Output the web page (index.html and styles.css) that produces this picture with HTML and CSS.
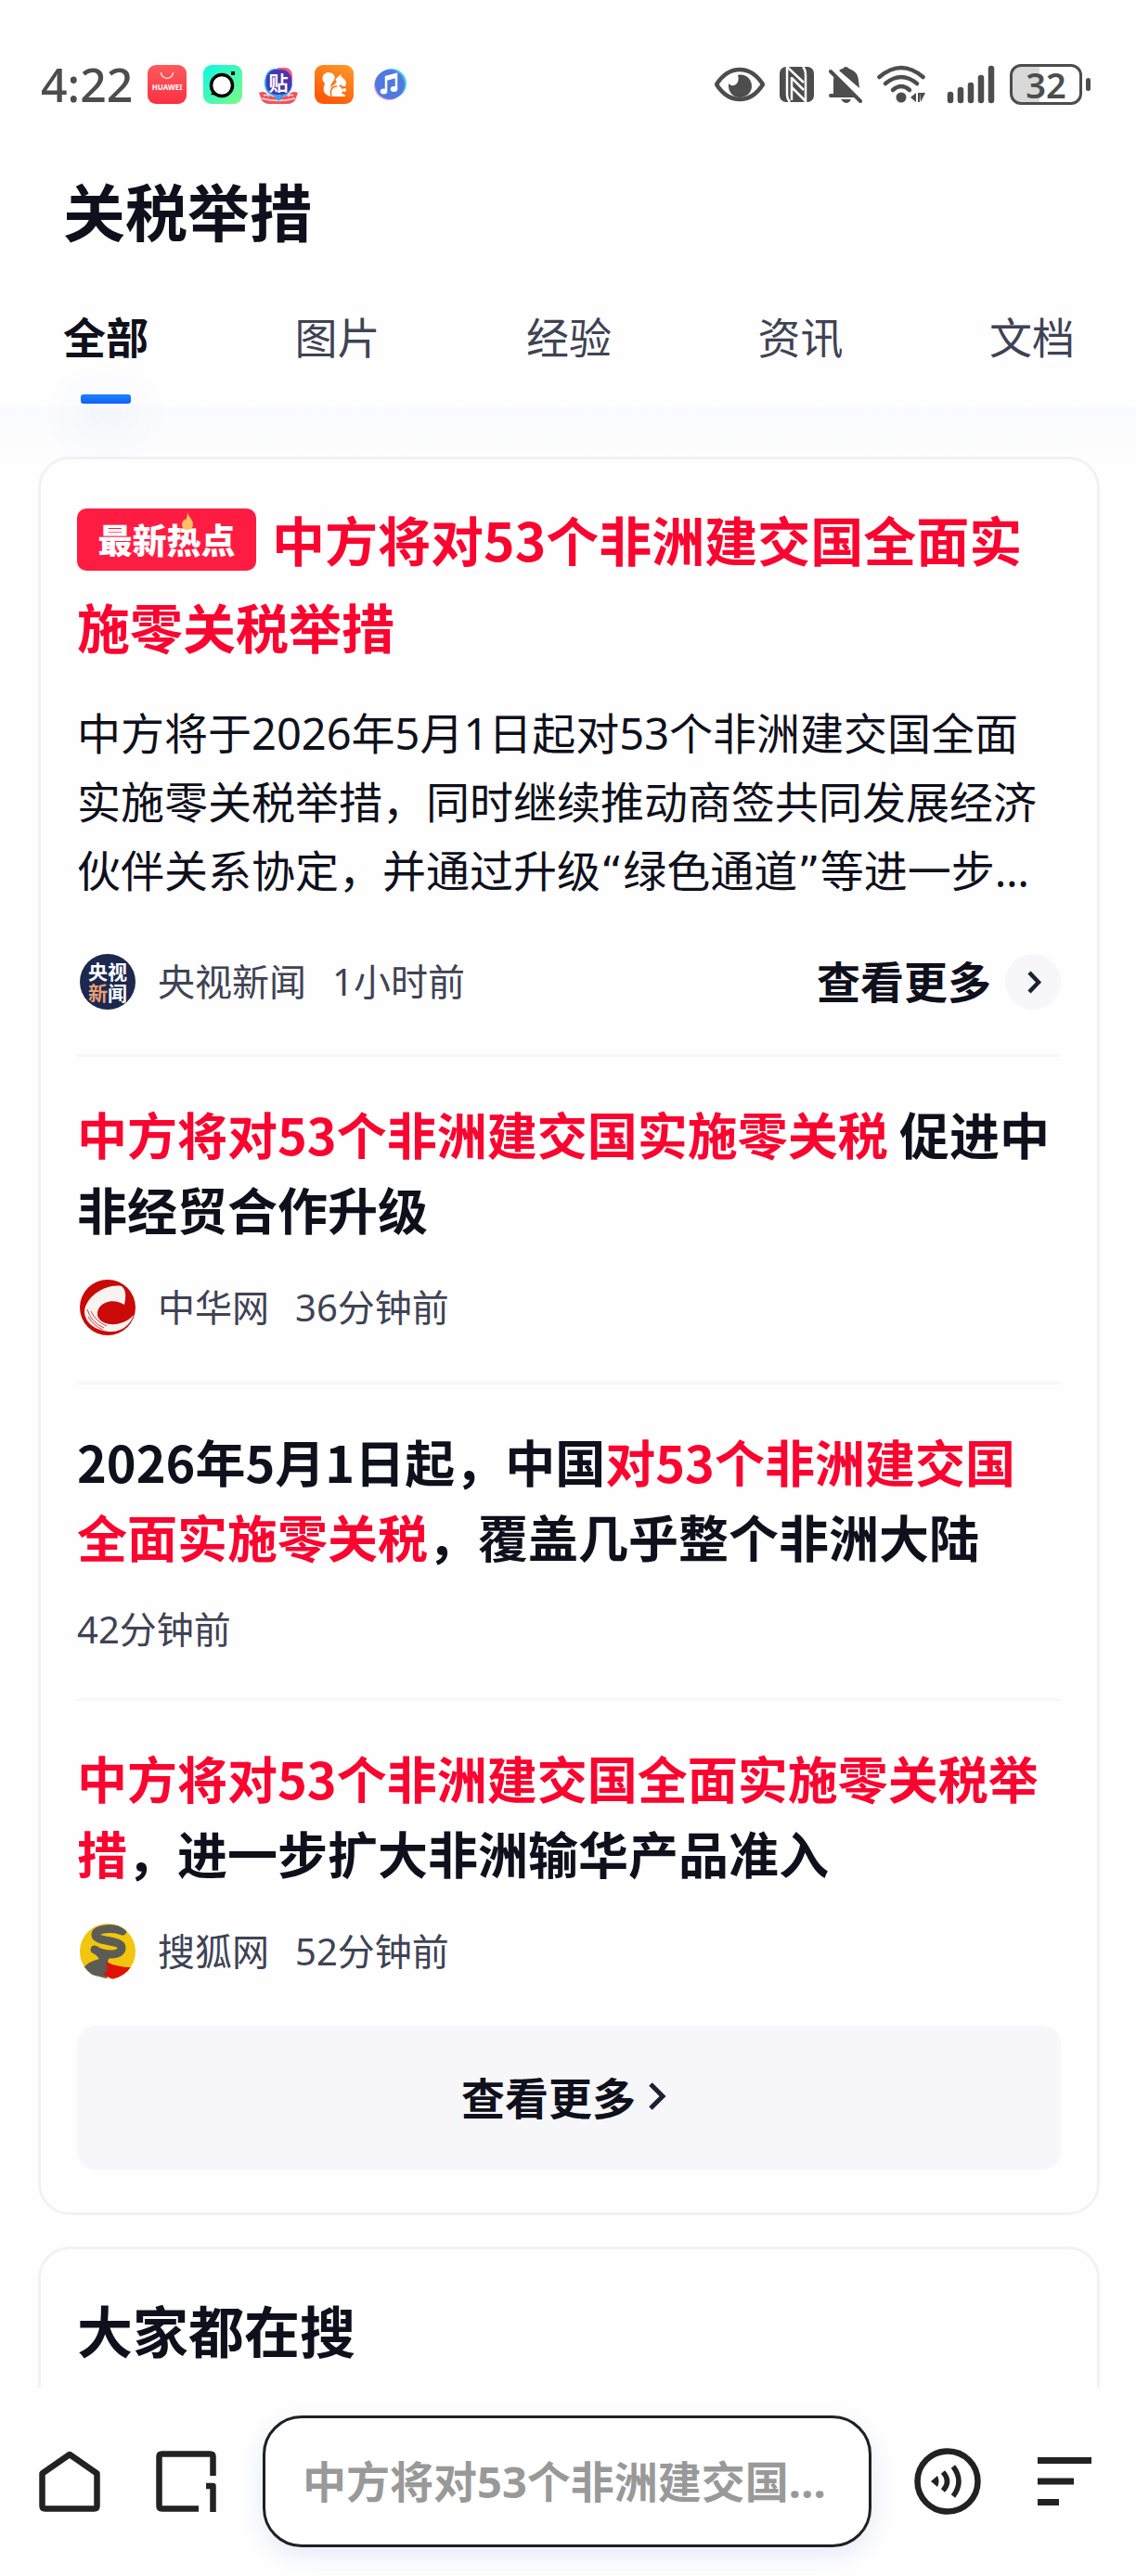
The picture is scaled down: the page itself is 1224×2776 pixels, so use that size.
FILE: index.html
```html
<!DOCTYPE html>
<html lang="zh-CN">
<head>
    <meta charset="UTF-8">
    <meta name="viewport" content="width=device-width, initial-scale=1.0">
    <title>关税举措</title>
    <link rel="stylesheet" href="styles.css">
</head>
<body>
    <header class="header">
        <div class="status-bar">
            <div class="status-left">
                <span class="clock">4:22</span>
                <svg width="42" height="42" viewBox="0 0 42 42">
                    <defs>
                        <linearGradient id="hw" x1="0" y1="0" x2="0" y2="1"><stop offset="0" stop-color="#ff5a5c"/><stop offset="1" stop-color="#fb3043"/></linearGradient>
                    </defs>
                    <rect width="42" height="42" rx="9" fill="url(#hw)"/>
                    <path d="M14.500 8a6.500 6.500 0 0 0 13 0" fill="none" stroke="#ffd9da" stroke-width="1.500"/>
                    <text x="21" y="27" text-anchor="middle" font-size="8" font-weight="700" fill="#fff">HUAWEI</text>
                </svg>
                <svg width="42" height="42" viewBox="0 0 42 42">
                    <defs>
                        <linearGradient id="chat" x1="0" y1="0" x2="1" y2="1"><stop offset="0" stop-color="#0cf7e4"/><stop offset="1" stop-color="#7bfb86"/></linearGradient>
                    </defs>
                    <rect width="42" height="42" rx="9" fill="url(#chat)"/>
                    <path d="M8 32l4-5 6 6z" fill="#000"/>
                    <circle cx="20" cy="22" r="11.500" fill="#fff" stroke="#000" stroke-width="3.500"/>
                    <rect x="30" y="7" width="4" height="4" fill="#000"/>
                </svg>
                <svg width="42" height="42" viewBox="0 0 42 42">
                    <path d="M0 30q6-3 10 2 11 6 22 0 4-5 10-2l-3 8q-3 4-8 4H11q-5 0-8-4z" fill="#f0525e"/>
                    <path d="M3 36q18 5 36 0M5 33q4-2 6 1M37 33q-4-2-6 1" fill="none" stroke="#ffd9d4" stroke-width="1.500"/>
                    <path d="M16 4h12q8 1 8 10v8q-2 10-10 12l-5 5-4-5Q7 31 6 22v-5Q8 5 16 4z" fill="#28a8f8"/>
                    <path d="M19 3h10q7 1 7 9v7l-6-9z" fill="#ef5a83"/>
                    <rect x="8" y="5" width="27" height="27" rx="11" fill="#4a35b0"/>
                    <text x="21" y="27" text-anchor="middle" font-size="21" font-weight="700" fill="#fff">贴</text>
                </svg>
                <svg width="42" height="42" viewBox="0 0 42 42">
                    <defs>
                        <linearGradient id="uc" x1="1" y1="0" x2="0.500" y2="1"><stop offset="0" stop-color="#ff9b2a"/><stop offset="1" stop-color="#fc5a08"/></linearGradient>
                    </defs>
                    <rect width="42" height="42" rx="9" fill="url(#uc)"/>
                    <path d="M17 34C10 32 8 27 11 20c-5-5-2-12 4-12 5 0 8 4 6 8-2 3-4 5-4 9 2-3 5-4 7-7-2-1-2-3 0-4l4-4 1 3c5 3 6 6 4 10-2 0-4 0-5-2l-2 2c4 1 5 5 3 8 3 0 4 1 4 3H20c-2 0-3-2-2-4z" fill="#fff"/>
                    <path d="M18 33c-2-6 1-10 6-10" fill="none" stroke="#fb6a12" stroke-width="1.500"/>
                    <circle cx="32" cy="27" r="2" fill="#fff"/>
                </svg>
                <svg width="42" height="42" viewBox="0 0 42 42">
                    <circle cx="20" cy="22" r="16" fill="#f2a0ee"/>
                    <circle cx="23" cy="20" r="16" fill="#53c8f5"/>
                    <circle cx="21" cy="21" r="16" fill="#4f79e0"/>
                    <path d="M17 28V13l11-3v16" fill="none" stroke="#fff" stroke-width="2.500"/>
                    <path d="M17 13l11-3v4l-11 3z" fill="#fff"/>
                    <ellipse cx="14.500" cy="28.500" rx="3.800" ry="3" fill="#fff"/>
                    <ellipse cx="25.500" cy="26" rx="3.800" ry="3" fill="#fff"/>
                </svg>
            </div>
            <div class="status-right">
                <svg width="54" height="38" viewBox="0 0 54 38">
                    <path d="M2 19C9 8 17 3 27 3s18 5 25 16C45 30 37 35 27 35S9 30 2 19z" fill="none" stroke="#4d4d4d" stroke-width="4.500" stroke-linejoin="round"/>
                    <path d="M25 9c8-2 15 4 15 12 0 7-6 12-13 12S14 27 15 18c4 5 13 1 10-9z" fill="#4d4d4d"/>
                </svg>
                <svg width="37" height="38" viewBox="0 0 37 38">
                    <rect width="37" height="38" rx="7" fill="#4d4d4d"/>
                    <path d="M25 0q3 3 3 9v29" fill="none" stroke="#fff" stroke-width="2.500"/>
                    <path d="M8 0v30q0 5 3 8" fill="none" stroke="#fff" stroke-width="2.500"/>
                    <path d="M8 0l18 17M13 12l13 13M13 22l15 15M13 11v25" fill="none" stroke="#fff" stroke-width="2.500"/>
                </svg>
                <svg width="36" height="42" viewBox="0 0 36 42">
                    <path d="M5 33V17q0-4 2-6l23 23H2" fill="#4d4d4d"/>
                    <path d="M11 6q2-2 4-2 3-4 7 0 9 3 10 12l1 9z" fill="#4d4d4d"/>
                    <path d="M2 33h26M2 7l32 32" stroke="#4d4d4d" stroke-width="4" stroke-linecap="round"/>
                    <path d="M13 37h11q-2 4-5 4t-6-4z" fill="#4d4d4d"/>
                </svg>
                <svg width="52" height="42" viewBox="0 0 52 42">
                    <g fill="none" stroke="#4d4d4d" stroke-width="4.500" stroke-linecap="round">
                        <path d="M2.500 13Q26-7 49.500 13"/>
                        <path d="M9 20q17-14 34 0"/>
                        <path d="M17 27q9-8 18 0"/>
                    </g>
                    <circle cx="26" cy="35" r="5.500" fill="#4d4d4d"/>
                    <path d="M36 35l6-5v10zM44 30h2v10h-2zM46 30h6l-5 10z" fill="#4d4d4d"/>
                </svg>
                <svg width="59" height="42" viewBox="0 0 59 42">
                    <path d="M11 32v6M22 27v11M33 22v16M44 14v24M55 4v34" stroke="#4d4d4d" stroke-width="6.500" stroke-linecap="round"/>
                </svg>
                <div class="battery">32</div>
            </div>
        </div>
        <h1 class="page-title">关税举措</h1>
        <nav class="tabs">
            <a href="#" class="tab active">全部</a>
            <a href="#" class="tab">图片</a>
            <a href="#" class="tab">经验</a>
            <a href="#" class="tab">资讯</a>
            <a href="#" class="tab">文档</a>
        </nav>
    </header>

    <main class="content">
        <section class="card">
            <article class="top-news">
                <h2 class="top-title"><span class="hot-badge">最新热点<svg class="flame" width="14" height="20" viewBox="0 0 14 20"><path d="M7 0c1 5 6 8 6 13 0 4-3 6-6 6s-6-2-6-6c0-3 2-4 3-6l1 2c1-3 2-5 2-9z" fill="#ffc062"/></svg></span>中方将对53个非洲建交国全面实施零关税举措</h2>
                <p class="summary">中方将于2026年5月1日起对53个非洲建交国全面实施零关税举措，同时继续推动商签共同发展经济伙伴关系协定，并通过升级<span class="quote">“</span>绿色通道<span class="quote">”</span>等进一步…</p>
                <div class="meta">
                    <svg class="logo" width="60" height="60" viewBox="0 0 60 60">
                        <circle cx="30" cy="30" r="30" fill="#1c2850"/>
                        <text x="30" y="27" text-anchor="middle" font-size="21" font-weight="700" fill="#fff">央视</text>
                        <text x="30" y="50" text-anchor="middle" font-size="21" font-weight="700" fill="#fff"><tspan fill="#e9a073">新</tspan>闻</text>
                    </svg>
                    <span>央视新闻</span>
                    <span>1小时前</span>
                    <a href="#" class="more-link">查看更多
                        <svg width="60" height="60" viewBox="0 0 60 60">
                            <circle cx="30" cy="30" r="30" fill="#f7f7fa"/>
                            <path d="M26 20l10 10.500L26 41" fill="none" stroke="#1a2233" stroke-width="4.500"/>
                        </svg>
                    </a>
                </div>
            </article>

            <article class="news-item">
                <h3 class="news-title"><em>中方将对53个非洲建交国实施零关税</em> 促进中非经贸合作升级</h3>
                <div class="meta">
                    <svg class="logo" width="60" height="60" viewBox="0 0 60 60">
                        <circle cx="30" cy="30" r="30" fill="#c90a06"/>
                        <path d="M48 27C50 18 50 11 45 7 29 4 7 17 5 34c0 12 12 22 29 22 12 0 21-8 24-18-6 7-16 11-26 10-12-2-16-10-11-18 6-8 18-9 27-3z" fill="#f7f3f1"/>
                        <path d="M8 32q4 14 18 20M12 34q5 11 17 16M9 40q6 10 16 14" fill="none" stroke="#d4433e" stroke-width="1"/>
                    </svg>
                    <span>中华网</span>
                    <span>36分钟前</span>
                </div>
            </article>

            <article class="news-item">
                <h3 class="news-title">2026年5月1日起，中国<em>对53个非洲建交国全面实施零关税</em>，覆盖几乎整个非洲大陆</h3>
                <div class="meta">
                    <span>42分钟前</span>
                </div>
            </article>

            <article class="news-item">
                <h3 class="news-title"><em>中方将对53个非洲建交国全面实施零关税举措</em>，进一步扩大非洲输华产品准入</h3>
                <div class="meta">
                    <svg class="logo" width="60" height="60" viewBox="0 0 60 60">
                        <defs><clipPath id="round"><circle cx="30" cy="30" r="30"/></clipPath></defs>
                        <g clip-path="url(#round)">
                            <rect width="60" height="60" fill="#f1c60c"/>
                            <path d="M0 55q20-4 36 5H0z" fill="#f4f4f4"/>
                            <path d="M3 48q8-8 18-10l-5-6 16 4-2 5 4 6-5 12-16-4H7z" fill="#5c5c57"/>
                            <path d="M28 41q14 7 32 6-8 12-21 14-8-2-14-7l5-4z" fill="#df1206"/>
                            <path d="M46 8C36 4 17 5 17 12c0 8 28 5 28 14 0 9-18 9-29 2" fill="none" stroke="#5c5c57" stroke-width="9" stroke-linecap="round"/>
                        </g>
                    </svg>
                    <span>搜狐网</span>
                    <span>52分钟前</span>
                </div>
            </article>

            <button class="more-btn">查看更多
                <svg width="30" height="32" viewBox="0 0 30 32"><path d="M2 3l13 13L2 29" fill="none" stroke="#1a2233" stroke-width="5"/></svg>
            </button>
        </section>

        <section class="card">
            <h2 class="section-title">大家都在搜</h2>
        </section>
    </main>

    <footer class="toolbar">
        <button class="tool-btn" aria-label="主页">
            <svg width="80" height="66" viewBox="0 0 80 66"><path d="M3.500 24.500L33 4l29.500 20.500v35q0 3-3 3h-53q-3 0-3-3z" fill="none" stroke="#222" stroke-width="6.500" stroke-linejoin="round"/></svg>
        </button>
        <button class="tool-btn" aria-label="窗口">
            <svg width="69" height="66" viewBox="0 0 69 66"><path d="M46 62.500H6.500q-3 0-3-3v-53q0-3 3-3h52q3 0 3 3V27" fill="none" stroke="#222" stroke-width="6.500"/><path d="M54 38h7.500v28" fill="none" stroke="#222" stroke-width="6.500" stroke-linejoin="round"/></svg>
        </button>
        <input class="search-box" type="text" aria-label="搜索" placeholder="中方将对53个非洲建交国…">
        <button class="tool-btn" aria-label="语音播报">
            <svg width="72" height="72" viewBox="0 0 72 72">
                <circle cx="36" cy="36" r="32.500" fill="none" stroke="#222" stroke-width="6.500"/>
                <path d="M18 36l7-6q3 6 0 12z" fill="#222"/>
                <path d="M31 26q9 10 0 20M42 20q12 16 0 32" fill="none" stroke="#222" stroke-width="5.500"/>
            </svg>
        </button>
        <button class="tool-btn" aria-label="菜单">
            <svg width="73" height="54" viewBox="0 0 73 54"><path d="M15 4.500h58M15 27h39M15 49.500h23" stroke="#222" stroke-width="7"/></svg>
        </button>
    </footer>
</body>
</html>
```

FILE: styles.css
```css
* {
    box-sizing: border-box;
}
body {
    margin: 0;
    height: 100vh;
    display: flex;
    flex-direction: column;
    overflow: hidden;
    background: #fefefe;
    color: #0f101c;
    font-family: "Noto Sans", "Noto Sans CJK SC", sans-serif;
}
h1, h2, h3, p {
    margin: 0;
}
a {
    color: inherit;
    text-decoration: none;
}
svg {
    display: block;
    flex: none;
}
button {
    border: none;
    padding: 0;
    background: none;
    color: inherit;
    font-family: inherit;
    cursor: pointer;
}

/* header */
.status-bar {
    display: flex;
    justify-content: space-between;
    align-items: center;
    height: 182px;
    padding: 0 50px 0 44px;
}
.status-left {
    display: flex;
    align-items: center;
    gap: 18px;
}
.status-right {
    display: flex;
    align-items: center;
    gap: 16px;
}
.clock {
    margin-right: -2px;
    font-size: 50px;
    font-weight: 500;
    line-height: 60px;
    color: #4d4d4d;
}
.battery {
    position: relative;
    width: 78px;
    height: 44px;
    margin-right: 8px;
    border: 3px solid #4d4d4d;
    border-radius: 12px;
    background: linear-gradient(90deg, #d9d9d9 29px, transparent 29px);
    color: #4d4d4d;
    font-size: 38px;
    font-weight: 600;
    line-height: 38px;
    text-align: center;
}
.battery::after {
    content: "";
    position: absolute;
    right: -12px;
    top: 12px;
    width: 5px;
    height: 14px;
    border-radius: 3px;
    background: #4d4d4d;
}
.page-title {
    padding: 7px 68px 0;
    font-size: 67px;
    line-height: 80px;
}
.tabs {
    display: flex;
    justify-content: space-between;
    padding: 64px 66px 0 68px;
}
.tab {
    position: relative;
    height: 105px;
    font-size: 46px;
    line-height: 60px;
    color: #3f4354;
}
.tab.active {
    font-weight: 700;
    color: #0f101c;
}
.tab.active::after {
    content: "";
    position: absolute;
    left: 50%;
    bottom: 3px;
    width: 54px;
    height: 10px;
    margin-left: -27px;
    border-radius: 3px;
    background: linear-gradient(#1c83ff, #1260f5);
    box-shadow: 0 16px 48px rgba(40, 100, 255, 0.25);
}

/* content */
.content {
    flex: 1;
    min-height: 0;
    overflow: hidden;
    padding: 54px 39px 0 41px;
    background: linear-gradient(rgba(249, 250, 252, 0.7), rgba(254, 254, 254, 0) 80px);
}
.card {
    margin-bottom: 34px;
    padding: 38px 39px 46px;
    border: 3px solid #f2f2f3;
    border-radius: 34px;
    background: #fefefe;
}
.top-title {
    font-family: "Noto Sans CJK SC", sans-serif;
    font-size: 57px;
    line-height: 94px;
    color: #fa0530;
}
.hot-badge {
    position: relative;
    display: inline-block;
    width: 193px;
    height: 67px;
    margin-right: 17px;
    border-radius: 10px;
    background: #ff1c42;
    color: #fff;
    font-size: 37px;
    font-weight: 900;
    line-height: 66px;
    text-align: center;
    vertical-align: 8px;
}
.flame {
    position: absolute;
    left: 112px;
    top: 4px;
}
.summary {
    margin: 32px 0 51px;
    font-size: 47px;
    line-height: 74px;
}
.quote {
    font-family: "DejaVu Sans", sans-serif;
}
.meta {
    display: flex;
    align-items: center;
    gap: 28px;
    font-size: 40px;
    line-height: 48px;
    color: #3f4354;
}
.logo {
    margin: 0 -4px 0 3px;
}
.more-link {
    display: flex;
    align-items: center;
    gap: 15px;
    margin-left: auto;
    color: #0f101c;
    font-size: 47px;
    font-weight: 700;
}
.top-news {
    padding-bottom: 48px;
}
.news-item {
    padding: 42px 0 50px;
    border-top: 3px solid #f7f7f8;
}
.news-title {
    margin-bottom: 36px;
    font-family: "Noto Sans CJK SC", sans-serif;
    font-size: 54px;
    line-height: 81px;
}
.news-title em {
    font-style: normal;
    color: #fa0530;
}
.more-btn {
    display: flex;
    justify-content: center;
    align-items: center;
    gap: 14px;
    width: 100%;
    height: 155px;
    padding-bottom: 4px;
    border-radius: 20px;
    background: #f7f7fa;
    font-size: 47px;
    font-weight: 700;
}
.section-title {
    padding-top: 6px;
    font-size: 60px;
    line-height: 90px;
}

/* bottom toolbar */
.toolbar {
    display: flex;
    align-items: center;
    gap: 46px;
    padding: 30px 48px 31px 42px;
    background: #fefefe;
}
.search-box {
    flex: 1;
    min-width: 0;
    height: 142px;
    padding: 0 40px;
    border: 3px solid #1f2023;
    border-radius: 42px;
    background: #fff;
    box-shadow: 0 8px 24px rgba(60, 80, 200, 0.12);
    font-family: inherit;
    font-size: 47px;
    font-weight: 700;
    text-overflow: ellipsis;
}
.search-box::placeholder {
    color: #999;
    opacity: 1;
}
```
